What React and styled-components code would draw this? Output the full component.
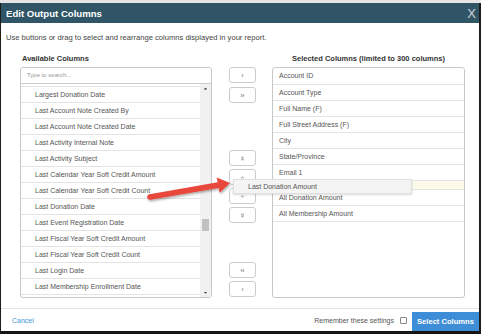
import React from 'react';
import styled, { createGlobalStyle } from 'styled-components';
import {
  FaAngleRight,
  FaAngleDoubleRight,
  FaAngleDoubleUp,
  FaAngleUp,
  FaAngleDown,
  FaAngleDoubleDown,
  FaAngleDoubleLeft,
  FaAngleLeft,
  FaCaretUp,
  FaCaretDown,
} from 'react-icons/fa';

const available = [
  'Largest Donation Date',
  'Last Account Note Created By',
  'Last Account Note Created Date',
  'Last Activity Internal Note',
  'Last Activity Subject',
  'Last Calendar Year Soft Credit Amount',
  'Last Calendar Year Soft Credit Count',
  'Last Donation Date',
  'Last Event Registration Date',
  'Last Fiscal Year Soft Credit Amount',
  'Last Fiscal Year Soft Credit Count',
  'Last Login Date',
  'Last Membership Enrollment Date',
];

const selectedTop = [
  'Account ID',
  'Account Type',
  'Full Name (F)',
  'Full Street Address (F)',
  'City',
  'State/Province',
  'Email 1',
];

const selectedBottom = ['All Donation Amount', 'All Membership Amount'];

const GlobalStyle = createGlobalStyle`
  html, body {
    margin: 0;
    padding: 0;
    background: #e6e6e6;
  }
  * {
    box-sizing: border-box;
  }
`;

const Page = styled.div`
  position: relative;
  width: 481px;
  height: 334px;
  padding-top: 3px;
  background: #e6e6e6;
  font-family: "Liberation Sans", Arial, sans-serif;
  overflow: hidden;
`;

const Modal = styled.div`
  height: 331px;
  background: #fff;
  border-left: 1px solid #1c1c1c;
  border-right: 2px solid #1c1c1c;
  border-bottom: 3px solid #151515;
  display: flex;
  flex-direction: column;
`;

const Header = styled.div`
  height: 20px;
  flex: none;
  background: #2f5566;
  display: flex;
  align-items: center;
  justify-content: space-between;
  padding: 0 3px 0 5px;
`;

const Title = styled.div`
  color: #fff;
  font-weight: bold;
  font-size: 9.6px;
`;

const Close = styled.div`
  color: #d0d6da;
  font-size: 13px;
  line-height: 1;
`;

const Intro = styled.div`
  margin: 10px 0 0 5px;
  height: 10px;
  line-height: 10px;
  font-size: 7.6px;
  color: #444;
`;

const Columns = styled.div`
  margin: 10px 0 0 19px;
  display: grid;
  grid-template-columns: 192px 60px 193px;
  grid-template-rows: 12px 231px;
  row-gap: 2px;
`;

const Heading = styled.div`
  font-size: 7.5px;
  font-weight: bold;
  color: #333;
  line-height: 12px;
  text-align: ${(p) => (p.center ? 'center' : 'left')};
  padding-left: ${(p) => (p.center ? '0' : '2px')};
`;

const Panel = styled.div`
  border: 1px solid #c8c8c8;
  border-radius: 3px;
  overflow: hidden;
  display: flex;
  flex-direction: column;
  background: #fff;
`;

const Search = styled.div`
  height: 16px;
  flex: none;
  border-bottom: 1px solid #ccc;
  font-size: 6px;
  color: #999;
  line-height: 15px;
  padding-left: 6px;
`;

const ListArea = styled.div`
  flex: 1;
  display: flex;
  min-height: 0;
`;

const Rows = styled.div`
  flex: 1;
  overflow: hidden;
  padding-top: ${(p) => p.offset || 0}px;
`;

const Row = styled.div`
  height: 16px;
  line-height: 15px;
  border-top: 1px solid #e4e4e4;
  font-size: 7px;
  color: #555;
  padding-left: ${(p) => p.indent}px;
  white-space: nowrap;
`;

const DropSpot = styled.div`
  height: 9px;
  background: #fbfae8;
  border-top: 1px solid #e4e4e4;
`;

const Scrollbar = styled.div`
  width: 11px;
  flex: none;
  background: #f1f1f1;
  display: flex;
  flex-direction: column;
  align-items: center;
  justify-content: space-between;
  padding: 2px 0 2px;
  color: #333;
  font-size: 5px;
`;

const Track = styled.div`
  flex: 1;
  width: 100%;
  display: flex;
  justify-content: center;
  padding-top: 128px;
`;

const Thumb = styled.div`
  width: 7px;
  height: 12px;
  background: #c1c1c1;
`;

const Mover = styled.div`
  display: flex;
  flex-direction: column;
  align-items: center;
`;

const Group = styled.div`
  display: flex;
  flex-direction: column;
  gap: ${(p) => p.gap}px;
  margin-top: ${(p) => p.top}px;
`;

const MoveButton = styled.div`
  width: 27px;
  height: 16px;
  border: 1px solid #ccc;
  border-radius: 3px;
  background: #fff;
  display: flex;
  align-items: center;
  justify-content: center;
  color: #9a9a9a;
  font-size: 5px;
`;

const Footer = styled.div`
  margin-top: auto;
  height: 23px;
  border-top: 1px solid #e2e2e2;
  display: flex;
  align-items: center;
  justify-content: space-between;
  padding: 0 0 0 11px;
`;

const Cancel = styled.a`
  color: #3a98d4;
  font-size: 7px;
  text-decoration: none;
`;

const FooterRight = styled.div`
  display: flex;
  align-items: center;
`;

const Remember = styled.span`
  font-size: 7px;
  color: #555;
`;

const Check = styled.span`
  width: 7px;
  height: 7px;
  border: 1px solid #888;
  border-radius: 1px;
  margin: 1px 5px 0 6px;
`;

const Primary = styled.div`
  width: 67px;
  height: 19px;
  background: #3d8ed6;
  color: #fff;
  font-weight: bold;
  font-size: 7.6px;
  display: flex;
  align-items: center;
  justify-content: center;
  margin-top: 3px;
`;

const Dragged = styled.div`
  position: absolute;
  left: 233px;
  top: 179px;
  width: 179px;
  height: 15px;
  background: rgba(244, 244, 244, 0.96);
  border: 1px solid #e0e0e0;
  box-shadow: 0 1px 2px rgba(0, 0, 0, 0.15);
  font-size: 7px;
  color: #555;
  line-height: 14px;
  padding-left: 14px;
`;

const Annotation = styled.svg`
  position: absolute;
  left: 0;
  top: 0;
  pointer-events: none;
`;

function App() {
  return (
    <Page>
      <GlobalStyle />
      <Modal>
        <Header>
          <Title>Edit Output Columns</Title>
          <Close>X</Close>
        </Header>
        <Intro>Use buttons or drag to select and rearrange columns displayed in your report.</Intro>
        <Columns>
          <Heading>Available Columns</Heading>
          <div />
          <Heading center>Selected Columns (limited to 300 columns)</Heading>

          <Panel>
            <Search>Type to search...</Search>
            <ListArea>
              <Rows offset={2}>
                {available.map((item) => (
                  <Row key={item} indent={14}>{item}</Row>
                ))}
                <Row indent={14} />
              </Rows>
              <Scrollbar>
                <FaCaretUp />
                <Track>
                  <Thumb />
                </Track>
                <FaCaretDown />
              </Scrollbar>
            </ListArea>
          </Panel>

          <Mover>
            <Group gap={4} top={0}>
              <MoveButton><FaAngleRight /></MoveButton>
              <MoveButton><FaAngleDoubleRight /></MoveButton>
            </Group>
            <Group gap={3} top={47}>
              <MoveButton><FaAngleDoubleUp /></MoveButton>
              <MoveButton><FaAngleUp /></MoveButton>
              <MoveButton><FaAngleDown /></MoveButton>
              <MoveButton><FaAngleDoubleDown /></MoveButton>
            </Group>
            <Group gap={3} top={39}>
              <MoveButton><FaAngleDoubleLeft /></MoveButton>
              <MoveButton><FaAngleLeft /></MoveButton>
            </Group>
          </Mover>

          <Panel>
            <Rows>
              {selectedTop.map((item, i) => (
                <Row key={item} indent={6} style={i === 0 ? { borderTop: 'none' } : undefined}>
                  {item}
                </Row>
              ))}
              <DropSpot />
              {selectedBottom.map((item) => (
                <Row key={item} indent={6}>{item}</Row>
              ))}
              <Row indent={6} />
            </Rows>
          </Panel>
        </Columns>
        <Footer>
          <Cancel href="#">Cancel</Cancel>
          <FooterRight>
            <Remember>Remember these settings</Remember>
            <Check />
            <Primary>Select Columns</Primary>
          </FooterRight>
        </Footer>
      </Modal>

      <Dragged>Last Donation Amount</Dragged>
      <Annotation width="481" height="334" viewBox="0 0 481 334">
        <defs>
          <filter id="shadow" x="-20%" y="-50%" width="140%" height="200%">
            <feDropShadow dx="1" dy="1.5" stdDeviation="1" floodColor="#000" floodOpacity="0.35" />
          </filter>
        </defs>
        <g filter="url(#shadow)" fill="#e8473a">
          <polygon points="150.4,199.8 218.6,187.9 219.6,192.8 230,183 216.6,177.6 217.8,182.3 149.6,194.2" />
          <circle cx="150" cy="197" r="2.8" />
        </g>
      </Annotation>
    </Page>
  );
}

export default App;
